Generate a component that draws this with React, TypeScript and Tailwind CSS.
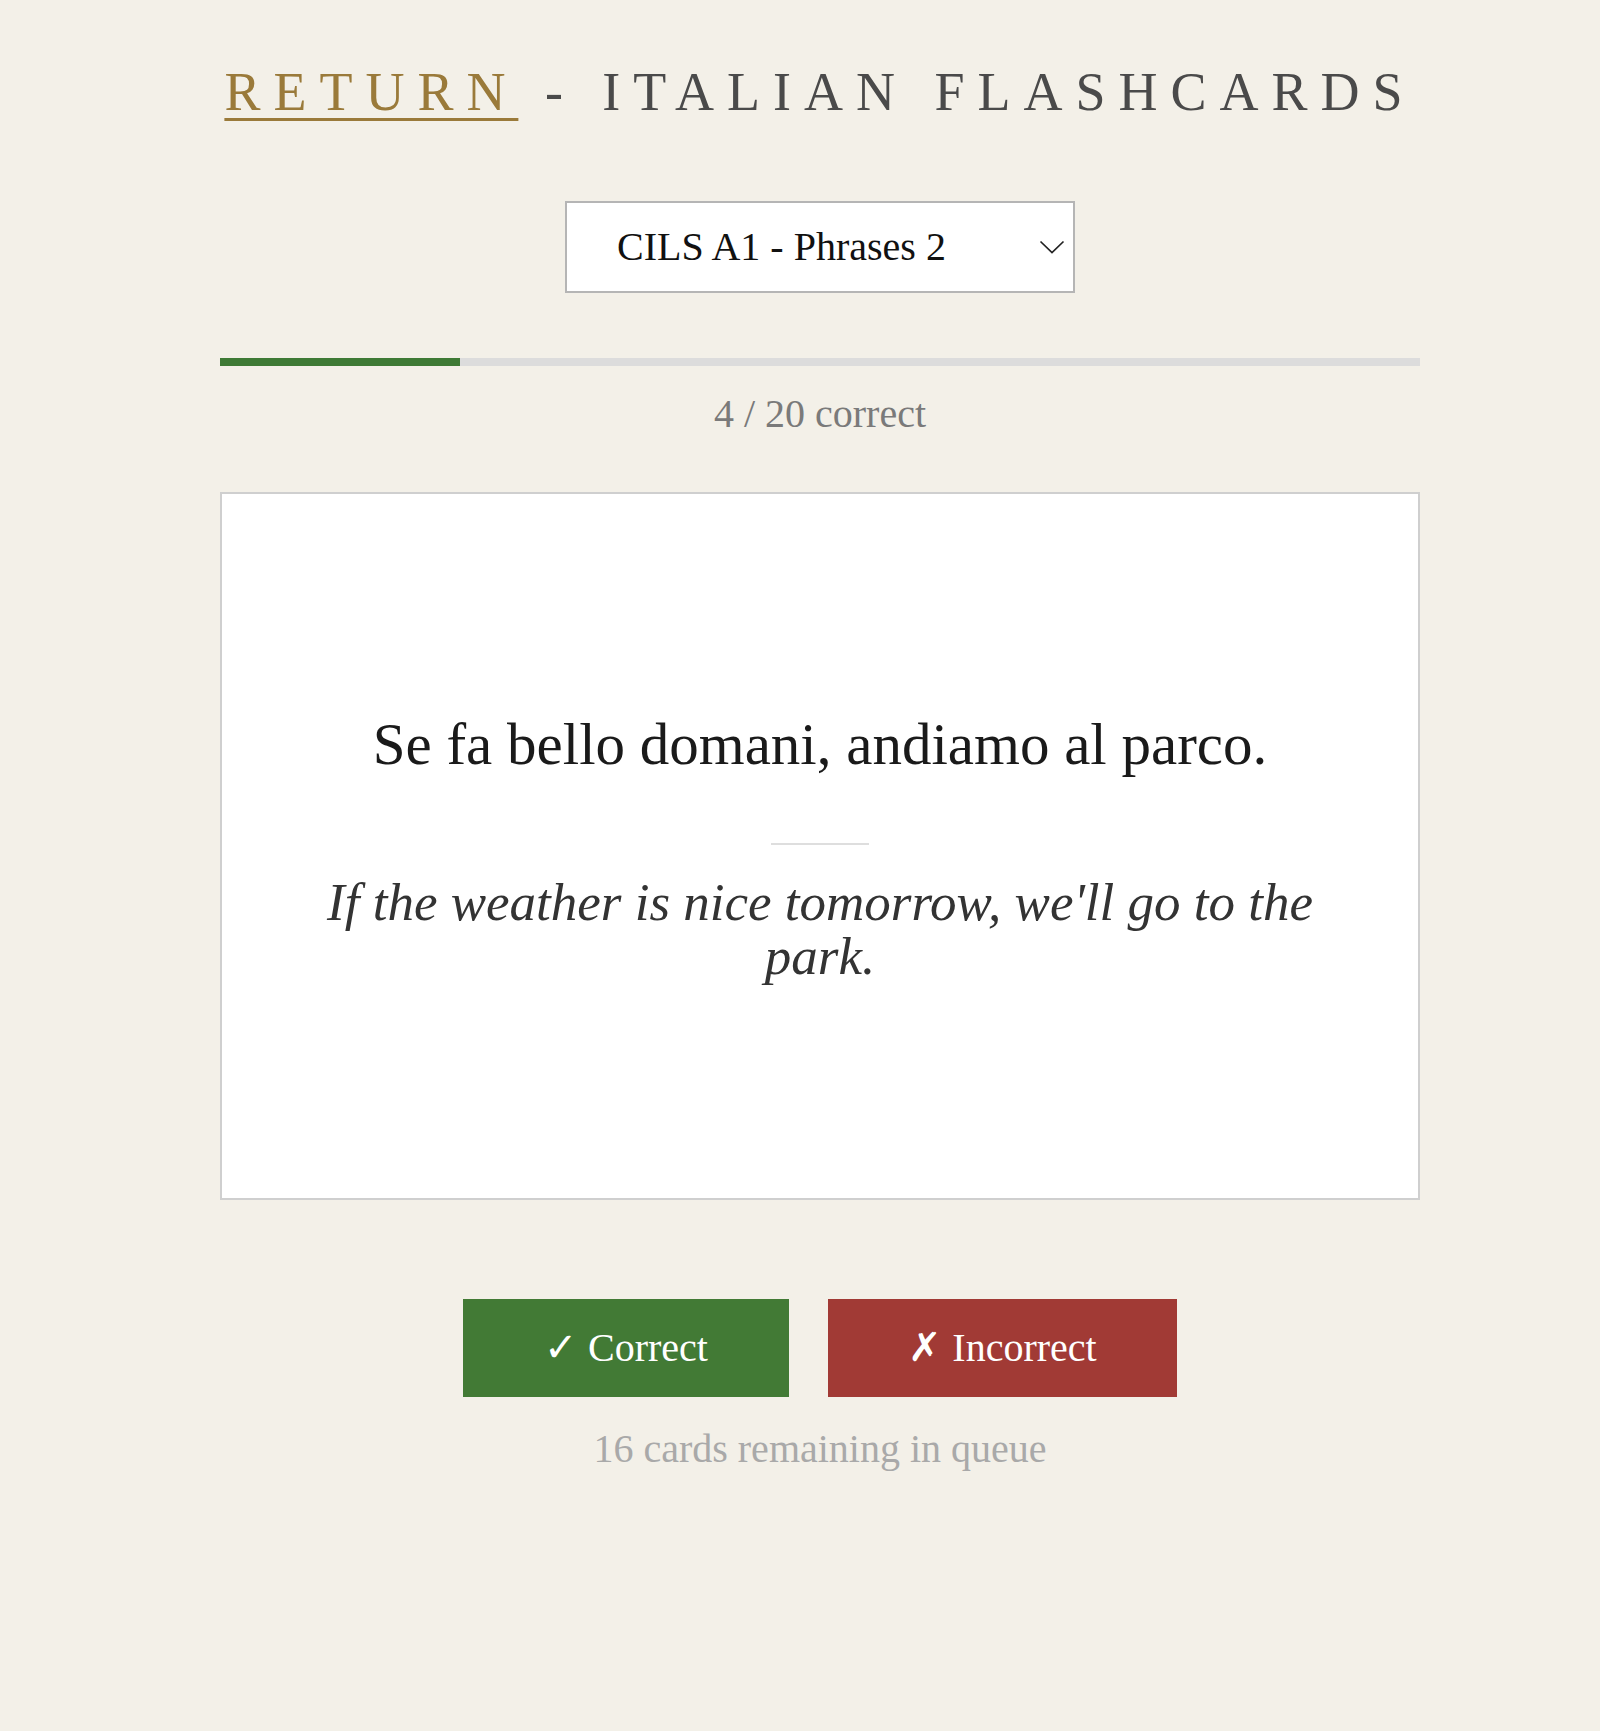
const serif = "font-['Liberation_Serif','Times_New_Roman',serif]";

const Chevron = () => (
  <svg
    width="26"
    height="14"
    viewBox="0 0 26 14"
    fill="none"
    stroke="#222"
    strokeWidth="1.7"
    className="absolute right-[10px] top-1/2 -translate-y-1/2 pointer-events-none"
  >
    <path d="M1.5 1.5 13 12.5 24.5 1.5" />
  </svg>
);

const Flashcards = () => {
  const correct = 4;
  const total = 20;
  const remaining = 16;

  return (
    <div className={`min-h-screen bg-[#f3f0e8] ${serif}`}>
      <div className="flex justify-center pl-[40px]">
        <div className="w-[1200px] flex flex-col items-center">
          {/* Header */}
          <h1 className="mt-[62px] text-[54px] leading-[60px] tracking-[13px] text-[#4a4a4a] font-normal whitespace-nowrap">
            <a href="#" className="text-[#9a7a3a] underline decoration-[3px] underline-offset-[8px]">
              RETURN
            </a>{" "}
            - ITALIAN FLASHCARDS
          </h1>

          {/* Deck picker */}
          <div className="relative mt-[79px]">
            <select
              defaultValue="a1-2"
              className="appearance-none w-[510px] h-[92px] bg-white border-2 border-[#b5b5b5] pl-[50px] pr-[60px] text-[40px] text-[#111] outline-none"
            >
              <option value="a1-1">CILS A1 - Phrases 1</option>
              <option value="a1-2">CILS A1 - Phrases 2</option>
              <option value="a1-3">CILS A1 - Phrases 3</option>
            </select>
            <Chevron />
          </div>

          {/* Progress */}
          <div className="mt-[65px] w-full h-[8px] bg-[#dcdcdc]">
            <div
              className="h-full bg-[#3e7a35]"
              style={{ width: `${(correct / total) * 100}%` }}
            />
          </div>
          <p className="mt-[28px] text-[40px] leading-[40px] text-[#7a7a7a]">
            {correct} / {total} correct
          </p>

          {/* Card */}
          <div className="mt-[58px] w-full h-[708px] bg-white border-2 border-[#cfcfcf] flex flex-col items-center justify-center px-[78px] text-center">
            <p className="text-[59px] leading-[70px] text-[#1a1a1a]">
              Se fa bello domani, andiamo al parco.
            </p>
            <div className="mt-[64px] w-[98px] h-[2px] bg-[#dedede]" />
            <p className="mt-[30px] text-[53px] leading-[54px] italic text-[#333]">
              If the weather is nice tomorrow, we'll go to the park.
            </p>
          </div>

          {/* Actions */}
          <div className="mt-[99px] flex gap-[39px]">
            <button className="h-[98px] w-[326px] bg-[#427a35] text-white text-[40px]">
              ✓ Correct
            </button>
            <button className="h-[98px] w-[349px] bg-[#a13a35] text-white text-[40px]">
              ✗ Incorrect
            </button>
          </div>
          <p className="mt-[32px] text-[40px] leading-[40px] text-[#a9a9a9]">
            {remaining} cards remaining in queue
          </p>
        </div>
      </div>
    </div>
  );
};

export default function App() {
  return <Flashcards />;
}
